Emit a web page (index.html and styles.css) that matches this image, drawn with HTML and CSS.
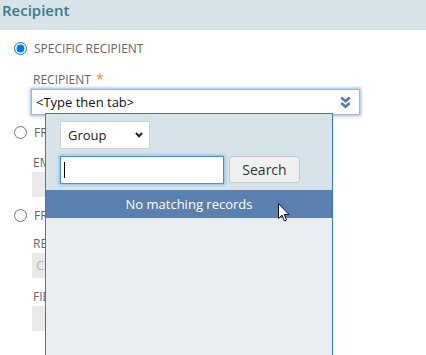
FILE: index.html
```html
<!DOCTYPE html>
<html lang="en">
<head>
    <meta charset="UTF-8">
    <title>Recipient</title>
    <link rel="stylesheet" href="styles.css">
</head>
<body>
    <div class="section-head">Recipient</div>

    <div class="section-body">
        <label class="radio-row row-1">
            <input type="radio" name="rcpt" checked>
            <span>SPECIFIC RECIPIENT</span>
        </label>
        <div class="field field-1">
            <div class="field-label">RECIPIENT <span class="req">*</span></div>
            <div class="combo-wrap">
                <div class="combo">
                    <span>&lt;Type then tab&gt;</span>
                    <svg class="combo-icon" width="11" height="13" viewBox="0 0 11 13">
                        <path d="M1.2 1.5 L5.5 5.3 L9.8 1.5" fill="none" stroke="#5b7ca4" stroke-width="2.6"/>
                        <path d="M1.2 7 L5.5 10.8 L9.8 7" fill="none" stroke="#5b7ca4" stroke-width="2.6"/>
                    </svg>
                </div>

                <div class="popup">
                    <div class="popup-top">
                        <div class="fake-select">
                            <span>Group</span>
                            <svg width="8" height="6" viewBox="0 0 8 6">
                                <path d="M1 1 L4 4.2 L7 1" fill="none" stroke="#222" stroke-width="2"/>
                            </svg>
                        </div>
                        <div class="search-line">
                            <div class="search-input"><span class="caret"></span></div>
                            <button class="search-btn">Search</button>
                        </div>
                    </div>
                    <div class="no-match">No matching records</div>
                    <div class="popup-rest"></div>
                    <svg class="pointer" width="12" height="20" viewBox="0 0 12 20">
                        <path d="M0.5 0.5 L0.5 15.5 L4 12.2 L6.4 18 L8.6 17 L6.2 11.5 L11 11.5 Z" fill="#fff" stroke="#111" stroke-width="1"/>
                    </svg>
                </div>
            </div>
        </div>

        <label class="radio-row row-2">
            <input type="radio" name="rcpt">
            <span>FROM EMAIL ADDRESS</span>
        </label>
        <div class="field field-2">
            <div class="field-label">EMAIL</div>
            <div class="grey-input"></div>
        </div>

        <label class="radio-row row-3">
            <input type="radio" name="rcpt">
            <span>FROM RECORD FIELD</span>
        </label>
        <div class="field field-3">
            <div class="field-label">RECORD TYPE</div>
            <div class="grey-input"><span class="muted">Contact</span></div>
        </div>
        <div class="field field-4">
            <div class="field-label">FIELD</div>
            <div class="grey-input"></div>
        </div>
    </div>
</body>
</html>
```

FILE: styles.css
```css
* {
    margin: 0;
    padding: 0;
    box-sizing: border-box;
}

body {
    font-family: 'Open Sans', 'Liberation Sans', sans-serif;
    background: #fff;
    color: #333;
    min-height: 355px;
}

.section-head {
    height: 30px;
    background: #d6e3e8;
    color: #3a7a8d;
    font-size: 15px;
    font-weight: 600;
    line-height: 20px;
    padding-left: 2px;
}

.section-body {
    padding-left: 14px;
}

.radio-row {
    display: flex;
    align-items: center;
    gap: 7px;
    height: 14px;
    font-size: 12px;
    color: #666;
}

.radio-row input {
    width: 13px;
    height: 13px;
    margin: 0;
}

.row-1 { margin-top: 11px; }
.row-2 { margin-top: 10px; }
.row-3 { margin-top: 11px; }

.field {
    margin-left: 17px;
}

.field-label {
    font-size: 12px;
    line-height: 16px;
    color: #666;
    margin-left: 2px;
    margin-bottom: 1px;
}

.req {
    color: #e0902a;
    font-size: 14px;
    margin-left: 2px;
}

.field-1 { margin-top: 16px; margin-bottom: 7px; }
.field-2 { margin-top: 16px; }
.field-3 { margin-top: 14px; }
.field-4 { margin-top: 11px; }

.combo-wrap {
    position: relative;
}

.combo {
    width: 329px;
    height: 26px;
    border: 1px solid #aeb4ba;
    box-shadow: 0 0 3px 1px #8fb8ea;
    display: flex;
    align-items: center;
    justify-content: space-between;
    padding: 0 8px 0 4px;
    font-size: 13px;
    color: #111;
}

.grey-input {
    width: 270px;
    height: 25px;
    background: #e9e9e9;
    margin-left: 1px;
    font-size: 13px;
    line-height: 25px;
    padding-left: 4px;
}

.muted {
    color: #b5b5b5;
}

/* dropdown that lies over the form */
.popup {
    position: absolute;
    top: 24px;
    left: 14px;
    width: 288px;
    height: 243px;
    border: 1px solid #2c7be5;
    border-bottom: none;
    background: #e9eef2;
    display: flex;
    flex-direction: column;
}

.popup-top {
    background: #d6e3e8;
    padding: 7px 14px 6px;
    display: flex;
    flex-direction: column;
    gap: 7px;
}

.fake-select {
    width: 90px;
    height: 28px;
    background: #fff;
    border: 1px solid #cfd3d6;
    display: flex;
    align-items: center;
    justify-content: space-between;
    padding: 0 6px 0 7px;
    font-size: 13px;
    color: #222;
}

.search-line {
    display: flex;
    gap: 5px;
}

.search-input {
    width: 164px;
    height: 28px;
    background: #fff;
    border: 1px solid #4a90e2;
    box-shadow: 0 0 3px 1px #8fb8ea;
    padding: 5px 0 0 3px;
}

.caret {
    display: block;
    width: 1px;
    height: 16px;
    background: #000;
}

.search-btn {
    width: 71px;
    height: 27px;
    background: #f0f0f0;
    border: 1px solid #c8c8c8;
    border-radius: 3px;
    font-family: inherit;
    font-size: 14px;
    color: #333;
}

.no-match {
    height: 28px;
    background: #5a80b0;
    color: #fff;
    font-size: 13px;
    line-height: 28px;
    text-align: center;
}

.popup-rest {
    flex: 1;
}

.pointer {
    position: absolute;
    left: 232px;
    top: 89px;
}
```
